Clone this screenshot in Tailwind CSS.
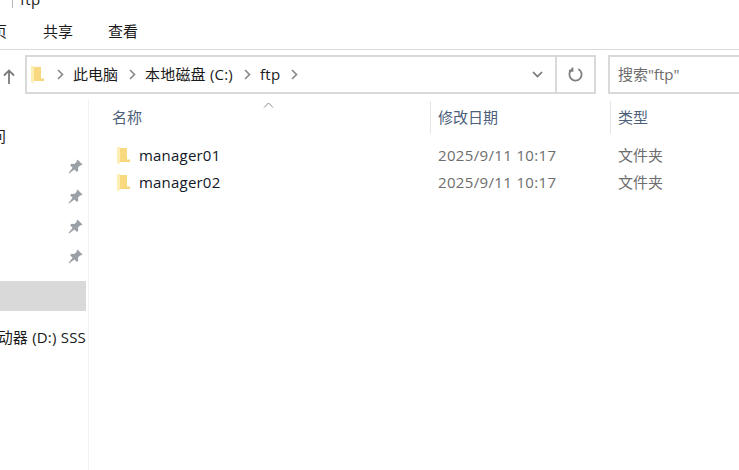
<!DOCTYPE html>
<html lang="zh-CN">
<head>
    <meta charset="UTF-8">
    <meta name="viewport" content="width=device-width, initial-scale=1.0">
    <title>ftp</title>
    <script src="https://cdn.jsdelivr.net/npm/@tailwindcss/browser@4"></script>
</head>
<body class="bg-white">
<div class="w-[739px] h-[470px] overflow-hidden flex flex-col text-[15px] text-[#1a1a1a] font-['Open_Sans','Noto_Sans_CJK_SC',sans-serif]">

    <!-- Title + ribbon tabs -->
    <header class="h-[50px] shrink-0 border-b border-[#dadada] overflow-hidden">
        <div class="h-[8px] flex items-end pl-[12px]">
            <div class="w-px h-[8px] bg-[#b5b5b5]"></div>
            <span class="ml-[7px] text-[15px] tracking-[0.3px] leading-[20px] -mb-[5px] relative -top-[4px]">ftp</span>
        </div>
        <nav class="h-[41px] flex items-center pt-[5px]">
            <span class="w-[7px] overflow-hidden flex justify-end whitespace-nowrap"><span class="shrink-0">页</span></span>
            <span class="ml-[36px]">共享</span>
            <span class="ml-[35px]">查看</span>
        </nav>
    </header>

    <!-- Address bar -->
    <div class="h-[39px] mt-[5px] shrink-0 flex items-stretch">
        <div class="w-[25px] flex items-center justify-start pl-[3px] pt-[3px]">
            <svg width="12" height="15" viewBox="0 0 12 15" fill="none" stroke="#7a7a7a" stroke-width="1.800"><path d="M6 15V1.500M1 6.500l5-5 5 5"/></svg>
        </div>
        <div class="w-[571px] border-2 border-[#d9d9d9] flex items-center">
            <svg class="ml-[4px]" width="13" height="18" viewBox="0 0 13 18"><path d="M2 1h8v14H2z" fill="#f8d97f"/><path d="M9 12.500h4V15H9z" fill="#f6d67c"/><path d="M0 0h3v15l-1 2.500-2-1.500z" fill="#fdeeb4"/></svg>
            <svg class="ml-[13px]" width="7" height="11" viewBox="0 0 7 11" fill="none" stroke="#8a8a8a" stroke-width="1.700"><path d="M1 1l4.500 4.500L1 10"/></svg>
            <span class="ml-[9px]">此电脑</span>
            <svg class="ml-[11px]" width="7" height="11" viewBox="0 0 7 11" fill="none" stroke="#8a8a8a" stroke-width="1.700"><path d="M1 1l4.500 4.500L1 10"/></svg>
            <span class="ml-[9px] tracking-[0.2px]">本地磁盘 (C:)</span>
            <svg class="ml-[11px]" width="7" height="11" viewBox="0 0 7 11" fill="none" stroke="#8a8a8a" stroke-width="1.700"><path d="M1 1l4.500 4.500L1 10"/></svg>
            <span class="ml-[9px] tracking-[0.3px]">ftp</span>
            <svg class="ml-[11px]" width="7" height="11" viewBox="0 0 7 11" fill="none" stroke="#8a8a8a" stroke-width="1.700"><path d="M1 1l4.500 4.500L1 10"/></svg>
            <svg class="ml-auto mr-[12px]" width="11" height="7" viewBox="0 0 11 7" fill="none" stroke="#777777" stroke-width="1.700"><path d="M1 1l4.500 4.500L10 1"/></svg>
            <div class="w-[39px] self-stretch border-l-2 border-[#d9d9d9] flex items-center justify-center">
                <svg width="15" height="15" viewBox="0 0 16 16" fill="none" stroke="#7f7f7f" stroke-width="1.900"><path d="M4.500 2.500A6.500 6.500 0 1 0 11 2.200"/><path d="M4.800 0.500v3.500H1"/></svg>
            </div>
        </div>
        <div class="ml-[12px] flex-1 border-2 border-r-0 border-[#d9d9d9] flex items-center pl-[8px] text-[#6d6d6d]">搜索"ftp"</div>
    </div>

    <!-- Body -->
    <div class="flex-1 flex min-h-0 mt-[6px]">
        <aside class="w-[89px] shrink-0 border-r border-[#f2f2f2] flex flex-col overflow-hidden">
            <div class="h-[47px] pt-[25px] leading-[22px]">
                <span class="w-[6px] overflow-hidden flex justify-end"><span class="shrink-0">问</span></span>
            </div>
            <div class="flex flex-col items-end pr-[5px] pt-[12px] gap-[15px] h-[134px]">
                <svg width="15" height="15" viewBox="0 0 15 15" fill="#9aa0a6"><path d="M9.500 0.500l5 5-1.300 1-.9-.3-2.300 2.400.3 2.900-1.400 1.400-2.500-2.500L1 14.500l-.5-.5 4.100-5.300L2.100 6.200l1.400-1.400 2.900.3 2.400-2.300-.3-.9z"/></svg>
                <svg width="15" height="15" viewBox="0 0 15 15" fill="#9aa0a6"><path d="M9.500 0.500l5 5-1.300 1-.9-.3-2.300 2.400.3 2.900-1.400 1.400-2.500-2.500L1 14.500l-.5-.5 4.100-5.300L2.100 6.200l1.400-1.400 2.900.3 2.400-2.300-.3-.9z"/></svg>
                <svg width="15" height="15" viewBox="0 0 15 15" fill="#9aa0a6"><path d="M9.500 0.500l5 5-1.300 1-.9-.3-2.300 2.400.3 2.900-1.400 1.400-2.500-2.500L1 14.500l-.5-.5 4.100-5.300L2.100 6.200l1.400-1.400 2.900.3 2.400-2.300-.3-.9z"/></svg>
                <svg width="15" height="15" viewBox="0 0 15 15" fill="#9aa0a6"><path d="M9.500 0.500l5 5-1.300 1-.9-.3-2.300 2.400.3 2.900-1.400 1.400-2.500-2.500L1 14.500l-.5-.5 4.100-5.300L2.100 6.200l1.400-1.400 2.900.3 2.400-2.300-.3-.9z"/></svg>
            </div>
            <div class="h-[30px] w-[86px] bg-[#d9d9d9]"></div>
            <div class="w-[86px] h-[26px] mt-[13px] overflow-hidden whitespace-nowrap flex justify-end items-center"><span class="shrink-0 tracking-[0.2px]">动器 (D:) SSS</span></div>
        </aside>

        <main class="flex-1 min-w-0 relative">
            <!-- sort arrow -->
            <svg class="absolute left-[174px] top-[2px]" width="11" height="6" viewBox="0 0 11 6" fill="none" stroke="#8a8a8a"><path d="M1 5.500l4.500-4.500L10 5.500"/></svg>
            <div class="flex h-[34px] pt-[1px] text-[#4c607a]">
                <div class="w-[341px] pl-[23px] pt-[5px]">名称</div>
                <div class="w-[180px] pl-[7px] pt-[5px] border-l border-[#e5e5e5]">修改日期</div>
                <div class="flex-1 pl-[7px] pt-[5px] border-l border-[#e5e5e5]">类型</div>
            </div>
            <div class="mt-[8px] flex flex-col">
                <div class="h-[27px] flex items-center">
                    <svg class="ml-[28px]" width="13" height="18" viewBox="0 0 13 18"><path d="M2 1h8v14H2z" fill="#f8d97f"/><path d="M9 12.500h4V15H9z" fill="#f6d67c"/><path d="M0 0h3v15l-1 2.500-2-1.500z" fill="#fdeeb4"/></svg>
                    <span class="ml-[9px] w-[299px] tracking-[0.2px] text-[#111827]">manager01</span>
                    <span class="w-[180px] tracking-[0.35px] text-[#6d6d6d]">2025/9/11 10:17</span>
                    <span class="text-[#6d6d6d]">文件夹</span>
                </div>
                <div class="h-[27px] flex items-center">
                    <svg class="ml-[28px]" width="13" height="18" viewBox="0 0 13 18"><path d="M2 1h8v14H2z" fill="#f8d97f"/><path d="M9 12.500h4V15H9z" fill="#f6d67c"/><path d="M0 0h3v15l-1 2.500-2-1.500z" fill="#fdeeb4"/></svg>
                    <span class="ml-[9px] w-[299px] tracking-[0.2px] text-[#111827]">manager02</span>
                    <span class="w-[180px] tracking-[0.35px] text-[#6d6d6d]">2025/9/11 10:17</span>
                    <span class="text-[#6d6d6d]">文件夹</span>
                </div>
            </div>
        </main>
    </div>
</div>
</body>
</html>
